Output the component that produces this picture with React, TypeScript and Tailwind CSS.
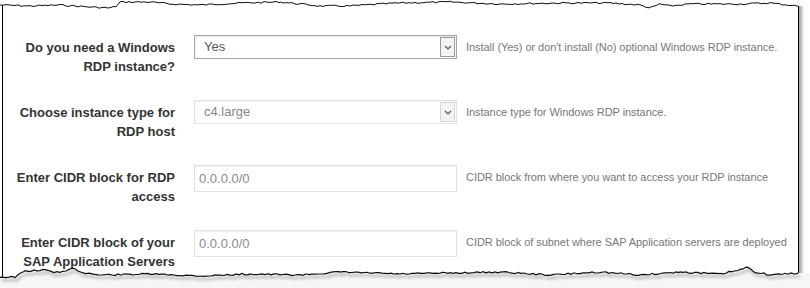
import React from "react";

type Pt = [number, number];

// jagged torn-paper line from a few key points plus deterministic noise
function jag(keys: Pt[], seed: number): Pt[] {
  let s = seed;
  const rnd = () => {
    s = (s * 9301 + 49297) % 233280;
    return s / 233280;
  };
  const out: Pt[] = [];
  for (let i = 0; i < keys.length - 1; i++) {
    const [x0, y0] = keys[i];
    const [x1, y1] = keys[i + 1];
    for (let x = x0; x < x1; x += 3) {
      const t = (x - x0) / (x1 - x0);
      out.push([x, y0 + (y1 - y0) * t + (rnd() - 0.5) * 1.6]);
    }
  }
  out.push(keys[keys.length - 1]);
  return out;
}

const topKeys: Pt[] = [
  [0, 5], [30, 6], [60, 5], [90, 7], [110, 8], [117, 6], [120, 2], [150, 2],
  [170, 4], [200, 5], [240, 3], [280, 2], [300, 4], [320, 6], [350, 6],
  [380, 4], [400, 3], [450, 2], [500, 4], [560, 3], [610, 3], [640, 5],
  [650, 8], [660, 4], [670, 6], [690, 4], [740, 4], [770, 3], [798, 6],
];

const bottomKeys: Pt[] = [
  [0, 277], [15, 277], [25, 271], [45, 270], [60, 273], [75, 268], [80, 272],
  [100, 275], [150, 274], [200, 276], [250, 274], [300, 275], [340, 272],
  [400, 274], [450, 273], [500, 272], [550, 275], [600, 272], [640, 275],
  [680, 272], [720, 274], [740, 270], [748, 267], [755, 272], [770, 275],
  [798, 273],
];

const toStr = (pts: Pt[]) => pts.map(([x, y]) => `${x},${y.toFixed(1)}`).join(" ");

function Chevron() {
  return (
    <svg width="8" height="5" viewBox="0 0 8 5">
      <path d="M1 1 L4 4 L7 1" fill="none" stroke="#555" strokeWidth="1.2" />
    </svg>
  );
}

function SelectBox({ value, strong }: { value: string; strong?: boolean }) {
  return (
    <div
      className={
        "w-[263px] h-[24px] flex items-center justify-between bg-white " +
        (strong
          ? "border border-[#a5a5a5] shadow-[inset_0_1px_2px_rgba(0,0,0,0.12)]"
          : "border border-[#e2e2e2] shadow-[inset_0_1px_1px_rgba(0,0,0,0.05)]")
      }
    >
      <span className={"pl-[9px] text-[13px] " + (strong ? "text-[#555]" : "text-[#888]")}>
        {value}
      </span>
      <div
        className={
          "mr-[1px] w-[15px] h-[20px] flex items-center justify-center bg-[#f4f4f4] " +
          (strong ? "border border-[#9a9a9a]" : "border border-[#d6d6d6]")
        }
      >
        <Chevron />
      </div>
    </div>
  );
}

function TextBox({ value }: { value: string }) {
  return (
    <div className="w-[263px] h-[27px] flex items-center bg-white border border-[#e0e0e0] shadow-[inset_0_1px_1px_rgba(0,0,0,0.06)]">
      <span className="pl-[4px] text-[13px] text-[#8a8a8a]">{value}</span>
    </div>
  );
}

const rows = [
  {
    label: ["Do you need a Windows", "RDP instance?"],
    control: <SelectBox value="Yes" strong />,
    help: "Install (Yes) or don't install (No) optional Windows RDP instance.",
  },
  {
    label: ["Choose instance type for", "RDP host"],
    control: <SelectBox value="c4.large" />,
    help: "Instance type for Windows RDP instance.",
  },
  {
    label: ["Enter CIDR block for RDP", "access"],
    control: <TextBox value="0.0.0.0/0" />,
    help: "CIDR block from where you want to access your RDP instance",
  },
  {
    label: ["Enter CIDR block of your", "SAP Application Servers"],
    control: <TextBox value="0.0.0.0/0" />,
    help: "CIDR block of subnet where SAP Application servers are deployed",
  },
];

export default function App() {
  const top = jag(topKeys, 7);
  const bottom = jag(bottomKeys, 13);

  return (
    <div
      className="relative w-[810px] h-[288px] overflow-hidden bg-white"
      style={{ fontFamily: '"Liberation Sans", Arial, sans-serif' }}
    >
      <div className="ml-[2px] w-[797px] h-[288px] bg-white border-l border-r border-black shadow-[3px_0_3px_rgba(0,0,0,0.35)] pt-[35px]">
        {rows.map((r, i) => (
          <div key={i} className="flex items-start h-[65px]">
            <div className="w-[172px] text-right text-[13px] font-bold leading-[19px] text-[#333] pt-[3px] whitespace-nowrap">
              {r.label[0]}
              <br />
              {r.label[1]}
            </div>
            <div className="ml-[19px]">{r.control}</div>
            <div className="ml-[9px] text-[11px] leading-[24px] text-[#777] whitespace-nowrap tracking-[-0.05px]">
              {r.help}
            </div>
          </div>
        ))}
      </div>

      {/* torn top edge */}
      <svg className="absolute left-0 top-0" width="810" height="16" viewBox="0 0 810 16">
        <polygon points={`0,0 ${toStr(top)} 810,6 810,0`} fill="#fff" />
        <polyline points={toStr(top)} fill="none" stroke="#111" strokeWidth="1" />
      </svg>

      {/* torn bottom edge */}
      <svg className="absolute left-0 top-0" width="810" height="288" viewBox="0 0 810 288">
        <defs>
          <filter id="sh" x="-5%" y="-50%" width="110%" height="300%">
            <feDropShadow dx="2" dy="3" stdDeviation="1.6" floodColor="#000" floodOpacity="0.45" />
          </filter>
        </defs>
        <polygon points={`0,288 ${toStr(bottom)} 810,273 810,288`} fill="#f6f6f6" />
        <polyline points={toStr(bottom)} fill="none" stroke="#111" strokeWidth="1.2" filter="url(#sh)" />
      </svg>
    </div>
  );
}
